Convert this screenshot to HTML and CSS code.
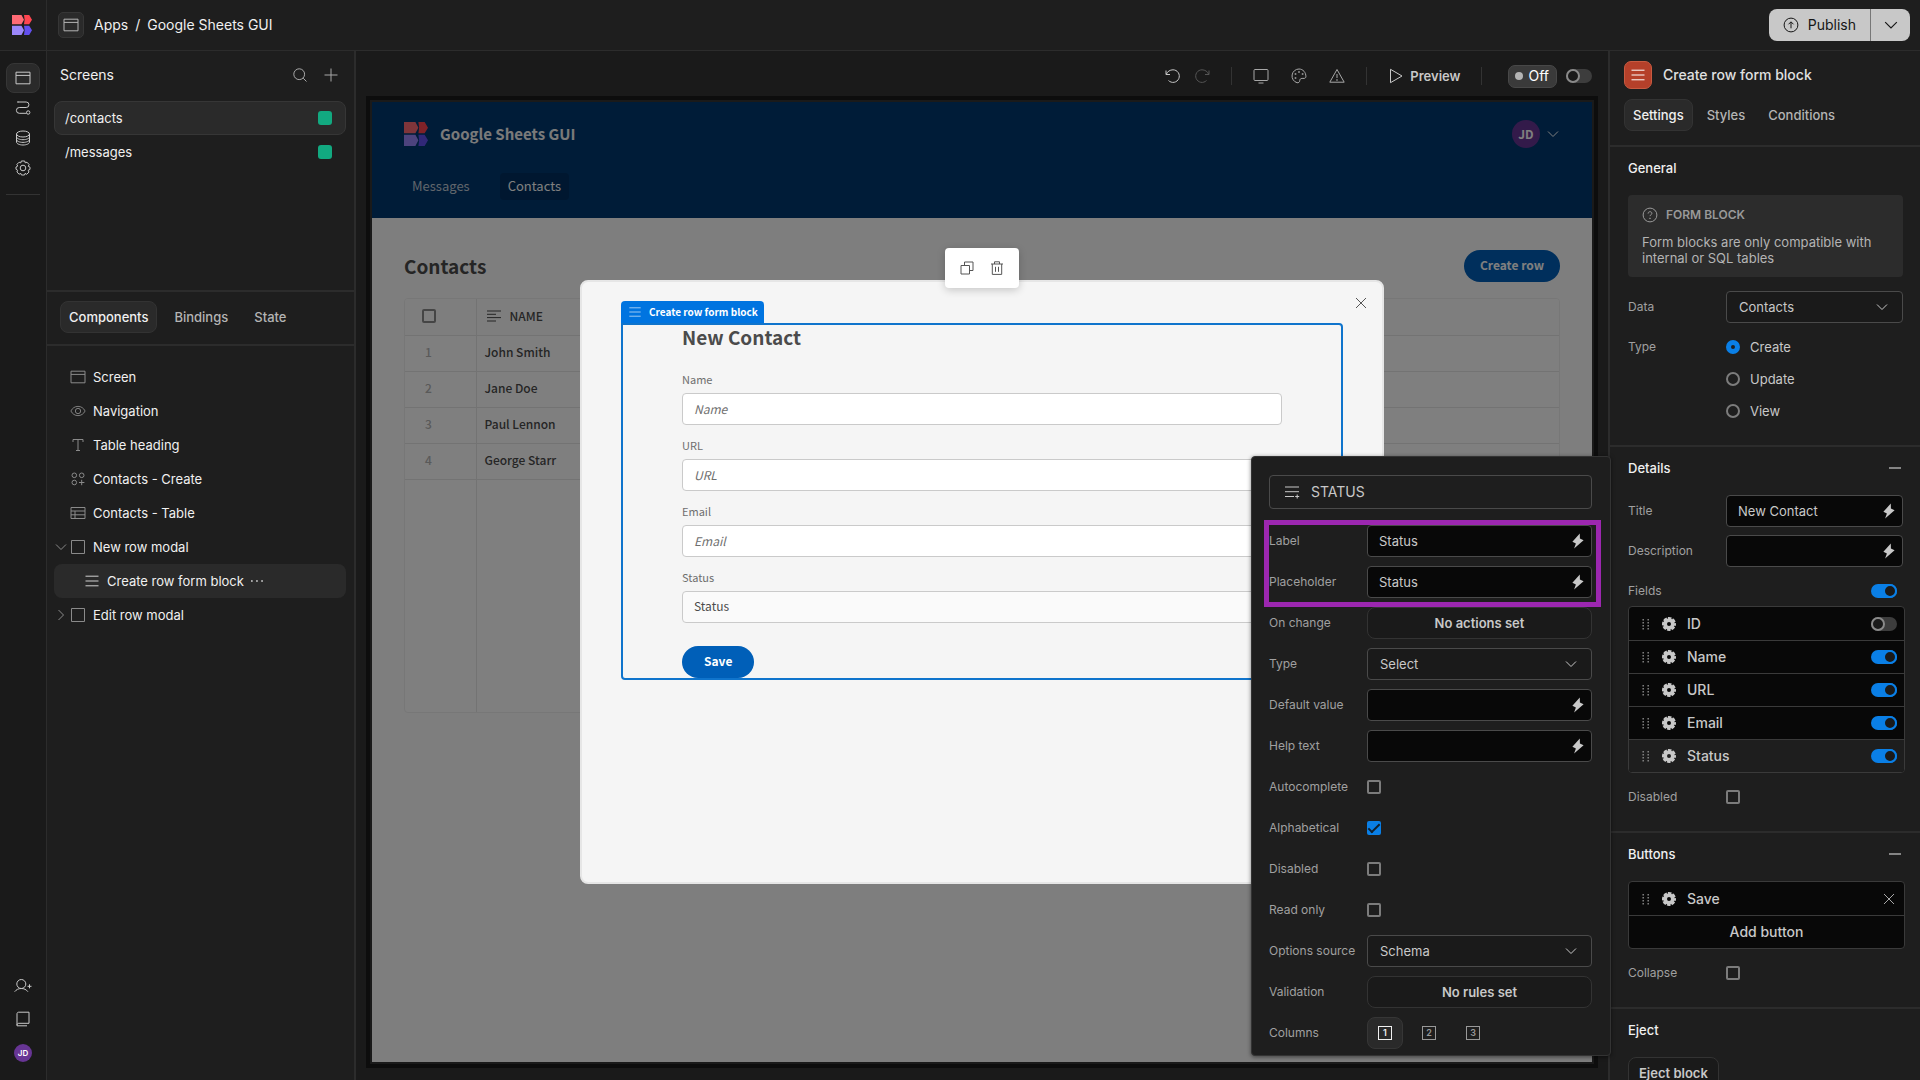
FILE: index.html
```html
<!DOCTYPE html>
<html lang="en">
<head>
    <meta charset="UTF-8">
    <meta name="viewport" content="width=device-width, initial-scale=1.0">
    <title>Google Sheets GUI</title>
    <link rel="stylesheet" href="styles.css">
</head>
<body>
    <svg class="sprite" aria-hidden="true">
        <symbol id="i-window" viewBox="0 0 16 16"><path d="M1 2.2h14v11.6H1zM1 5.4h14"/></symbol>
        <symbol id="i-flow" viewBox="0 0 16 16"><path d="M3.500 2h7.700a2.700 2.700 0 0 1 0 5.500H4.300a2.900 2.900 0 0 0 0 5.800h7.200M2 2h2"/><circle cx="13.200" cy="12.500" r="1.700"/></symbol>
        <symbol id="i-data" viewBox="0 0 16 16"><ellipse cx="8" cy="4" rx="6.500" ry="3"/><path d="M1.500 4v8c0 1.700 2.900 3 6.500 3s6.500-1.300 6.500-3V4M1.500 6.700c0 1.700 2.900 3 6.500 3s6.500-1.300 6.500-3M1.500 9.400c0 1.700 2.900 3 6.500 3s6.500-1.300 6.500-3"/></symbol>
        <symbol id="i-gear" viewBox="0 0 16 16"><circle cx="8" cy="8" r="2.800"/><path d="M6.300 1h3.400l.5 1.800 1.800-.6 2.200 2.500-1 1.500 1.800 1v2.200l-1.800.9.800 1.800-2.300 2.200-1.600-.9-.6 1.600H6.400l-.6-1.600-1.700.8-2.200-2.200.8-1.700L1 9.300V7l1.700-.9-.8-1.700 2.200-2.200 1.700.7z"/></symbol>
        <symbol id="i-gear-fill" viewBox="0 0 16 16"><circle cx="8" cy="8" r="3.900" stroke-width="3.800"/><circle cx="8" cy="8" r="5.900" stroke-width="2.200" stroke-dasharray="3.500 1.134" stroke-dashoffset="1.750"/></symbol>
        <symbol id="i-user-plus" viewBox="0 0 18 16"><circle cx="7.300" cy="6" r="4.500"/><path d="M.7 13.700c1.600-2.200 3.900-3.200 6.600-3.200s5 1 6.600 3.200M13.500 8.300h4M15.500 6.300v4"/></symbol>
        <symbol id="i-book" viewBox="0 0 16 16"><path d="M14 1.200H3.600c-.9 0-1.600.7-1.600 1.600v12h10M2 14.200c0-1.100.6-1.900 1.800-1.900H14V1.200"/></symbol>
        <symbol id="i-search" viewBox="0 0 16 16"><circle cx="7.200" cy="7.200" r="5.400"/><path d="M11.200 11.200l3.300 3.300"/></symbol>
        <symbol id="i-plus" viewBox="0 0 16 16"><path d="M8 1.500v13M1.500 8h13"/></symbol>
        <symbol id="i-eye" viewBox="0 0 18 16"><path d="M1 8c1.700-3.300 4.500-5.200 8-5.200S15.300 4.700 17 8c-1.700 3.300-4.500 5.200-8 5.200S2.700 11.300 1 8z"/><circle cx="9" cy="8" r="3"/></symbol>
        <symbol id="i-text" viewBox="0 0 16 16"><path d="M3 5V2.500h10V5M8 2.500v11M6 13.500h4"/></symbol>
        <symbol id="i-blocks" viewBox="0 0 16 16"><circle cx="4.300" cy="4.300" r="2.300"/><circle cx="11.700" cy="4.300" r="2.300"/><circle cx="4.300" cy="11.500" r="2.300"/><path d="M11.700 8.800v5.400M9 11.500h5.400"/></symbol>
        <symbol id="i-table" viewBox="0 0 16 16"><path d="M1 2.500h14v11H1zM1 6h14M1 9.800h14M5 6v7.500"/></symbol>
        <symbol id="i-square" viewBox="0 0 16 16"><path d="M1.500 1.500h13v13h-13z"/></symbol>
        <symbol id="i-rows" viewBox="0 0 16 16"><path d="M1.500 3.200h13M1.500 8h13M1.500 12.800h13"/></symbol>
        <symbol id="i-down" viewBox="0 0 12 12"><path d="M1 3.500l5 5 5-5"/></symbol>
        <symbol id="i-right" viewBox="0 0 12 12"><path d="M3.500 1l5 5-5 5"/></symbol>
        <symbol id="i-dots" viewBox="0 0 14 14"><path fill="currentColor" stroke="none" d="M1 6.200h1.700v1.600H1zM6.100 6.200h1.700v1.600H6.100zM11.200 6.200h1.700v1.600h-1.700z"/></symbol>
        <symbol id="i-undo" viewBox="0 0 16 16"><path d="M1 2.500v4h4M1.300 6.300C2.400 3.500 5 1.800 8 1.800a6.300 6.300 0 1 1-4.500 10.700"/></symbol>
        <symbol id="i-redo" viewBox="0 0 16 16"><path d="M15 2.500v4h-4M14.700 6.300C13.600 3.500 11 1.800 8 1.800a6.300 6.300 0 1 0 4.500 10.700"/></symbol>
        <symbol id="i-monitor" viewBox="0 0 16 16"><rect x="1" y="1.500" width="14" height="11" rx="1"/><path d="M5.500 15h5"/></symbol>
        <symbol id="i-palette" viewBox="0 0 16 16"><path d="M8 1a7 7 0 0 0-2 13.700c1.400.4 2.700-.6 2.700-2 0-1.500 1-2.300 2.400-2.300h2c1 0 1.700-.7 1.800-1.700C15 4.500 12 1 8 1z"/><path fill="currentColor" stroke="none" d="M7.200 3.200h1.600v1.600H7.200zM3.700 5.200h1.600v1.600H3.700zM10.800 5.200h1.600v1.600h-1.600zM3.700 9.200h1.600v1.600H3.700z"/></symbol>
        <symbol id="i-warning" viewBox="0 0 16 16"><path d="M8 1.500l7.200 12.700H.8zM8 6v4"/><circle cx="8" cy="12" r=".4"/></symbol>
        <symbol id="i-play" viewBox="0 0 16 16"><path d="M2.500 1.300v13.400L14 8z"/></symbol>
        <symbol id="i-publish" viewBox="0 0 16 16"><circle cx="8" cy="8" r="6.900"/><path d="M8 11.300V5M5.500 7.300L8 4.800l2.500 2.500"/></symbol>
        <symbol id="i-question" viewBox="0 0 16 16"><circle cx="8" cy="8" r="6.900"/><path d="M6.100 6.600c0-1.200.8-1.900 1.900-1.900s1.900.7 1.900 1.700c0 1.400-1.900 1.300-1.900 2.700"/><circle cx="8" cy="11.300" r=".4"/></symbol>
        <symbol id="i-bolt" viewBox="0 0 12 16"><path fill="currentColor" stroke="none" d="M7.800.4L.4 8.800l3.500 1.600-1.800 5.200 9.500-8.400-3.700-1.600z"/></symbol>
        <symbol id="i-minus" viewBox="0 0 14 14"><path d="M1 7h12" stroke-width="1.500"/></symbol>
        <symbol id="i-close" viewBox="0 0 12 12"><path d="M1 1l10 10M11 1L1 11"/></symbol>
        <symbol id="i-grip" viewBox="0 0 8 12"><path fill="currentColor" stroke="none" d="M.5 1h1.400v1.400H.5zM5.500 1h1.400v1.400H5.500zM.5 4h1.400v1.400H.5zM5.500 4h1.400v1.400H5.500zM.5 7h1.400v1.400H.5zM5.500 7h1.400v1.400H5.500zM.5 10h1.400v1.400H.5zM5.500 10h1.400v1.400H5.500z"/></symbol>
        <symbol id="i-form" viewBox="0 0 16 16"><path d="M1 3h14M1 7.700h14M1 12.500h9M13.200 10.500v4M11.200 12.500h4"/></symbol>
        <symbol id="i-align" viewBox="0 0 14 12"><path d="M0 1h14M0 4.300h9M0 7.600h14M0 11h9"/></symbol>
        <symbol id="i-copy" viewBox="0 0 14 14"><path d="M1 4.500h8.500V13H1zM4.500 4.500V1H13v8.500H9.500"/></symbol>
        <symbol id="i-trash" viewBox="0 0 14 14"><path d="M1 3h12M2.300 3v10.400h9.400V3M4.500 3V.8h5V3M5.500 5.800v5M8.500 5.800v5"/></symbol>
        <symbol id="i-logo" viewBox="0 0 20 20"><g stroke="none"><path fill="#ff6b75" d="M0 0h9.500L12 4.700 9.500 9.300H0z"/><path fill="#ff4550" d="M12 0h5.200L20 4.700l-2.800 4.600H12l.6-4.600z"/><path fill="#9b87fa" d="M0 10.700h9.500L12 15.300 9.500 20H0z"/><path fill="#6350f0" d="M12 10.700h5.200l2.800 4.600-2.800 4.700H12l.6-4.700z"/></g></symbol>
    </svg>

    <header class="topbar">
        <a class="brand" href="#" aria-label="Home"><svg class="icon icon-20"><use href="#i-logo"/></svg></a>
        <nav class="crumbs">
            <span class="crumb-icon"><svg class="icon"><use href="#i-window"/></svg></span>
            <a href="#">Apps</a>
            <span class="slash">/</span>
            <a href="#">Google Sheets GUI</a>
        </nav>
        <div class="publish">
            <button class="publish-main"><svg class="icon"><use href="#i-publish"/></svg>Publish</button>
            <button class="publish-more" aria-label="Publish options"><svg class="icon icon-14"><use href="#i-down"/></svg></button>
        </div>
    </header>

    <div class="workspace">
        <nav class="rail">
            <a class="rail-link active" href="#" aria-label="Design"><svg class="icon"><use href="#i-window"/></svg></a>
            <a class="rail-link" href="#" aria-label="Automations"><svg class="icon"><use href="#i-flow"/></svg></a>
            <a class="rail-link" href="#" aria-label="Data"><svg class="icon"><use href="#i-data"/></svg></a>
            <a class="rail-link" href="#" aria-label="Settings"><svg class="icon"><use href="#i-gear"/></svg></a>
            <hr>
            <div class="rail-bottom">
                <a href="#" aria-label="Invite user"><svg class="icon icon-18"><use href="#i-user-plus"/></svg></a>
                <a href="#" aria-label="Docs"><svg class="icon"><use href="#i-book"/></svg></a>
                <a class="rail-avatar" href="#">JD</a>
            </div>
        </nav>

        <aside class="left">
            <section class="screens">
                <header class="screens-head">
                    <h2>Screens</h2>
                    <button class="plain" aria-label="Search"><svg class="icon"><use href="#i-search"/></svg></button>
                    <button class="plain" aria-label="Add screen"><svg class="icon"><use href="#i-plus"/></svg></button>
                </header>
                <a class="row selected" href="#">/contacts<span class="role"></span></a>
                <a class="row" href="#">/messages<span class="role"></span></a>
            </section>
            <div class="tabs tree-tabs">
                <button class="tab active">Components</button>
                <button class="tab">Bindings</button>
                <button class="tab">State</button>
            </div>
            <div class="tree">
                <a class="node" href="#"><span class="caret"></span><svg class="icon"><use href="#i-window"/></svg>Screen</a>
                <a class="node" href="#"><span class="caret"></span><svg class="icon"><use href="#i-eye"/></svg>Navigation</a>
                <a class="node" href="#"><span class="caret"></span><svg class="icon"><use href="#i-text"/></svg>Table heading</a>
                <a class="node" href="#"><span class="caret"></span><svg class="icon"><use href="#i-blocks"/></svg>Contacts - Create</a>
                <a class="node" href="#"><span class="caret"></span><svg class="icon"><use href="#i-table"/></svg>Contacts - Table</a>
                <a class="node" href="#"><span class="caret"><svg class="icon icon-12"><use href="#i-down"/></svg></span><svg class="icon"><use href="#i-square"/></svg>New row modal</a>
                <a class="node child selected" href="#"><span class="caret"></span><svg class="icon"><use href="#i-rows"/></svg>Create row form block<svg class="icon icon-14 more"><use href="#i-dots"/></svg></a>
                <a class="node" href="#"><span class="caret"><svg class="icon icon-12"><use href="#i-right"/></svg></span><svg class="icon"><use href="#i-square"/></svg>Edit row modal</a>
            </div>
        </aside>

        <main class="center">
            <div class="toolbar">
                <button class="plain bright" aria-label="Undo"><svg class="icon"><use href="#i-undo"/></svg></button>
                <button class="plain dim" aria-label="Redo"><svg class="icon"><use href="#i-redo"/></svg></button>
                <span class="divider"></span>
                <div class="toolbar-group">
                    <button class="plain" aria-label="Device"><svg class="icon"><use href="#i-monitor"/></svg></button>
                    <button class="plain" aria-label="Theme"><svg class="icon"><use href="#i-palette"/></svg></button>
                    <button class="plain" aria-label="Errors"><svg class="icon"><use href="#i-warning"/></svg></button>
                </div>
                <span class="divider"></span>
                <button class="plain preview-button"><svg class="icon"><use href="#i-play"/></svg>Preview</button>
                <span class="divider"></span>
                <label class="off-pill" for="live"><span class="dot"></span>Off</label>
                <input class="switch" type="checkbox" id="live">
            </div>

            <div class="frame">
                <div class="app">
                    <header class="app-nav">
                        <div class="app-brand">
                            <svg class="icon icon-24"><use href="#i-logo"/></svg>
                            <strong>Google Sheets GUI</strong>
                            <button class="app-user"><span class="app-avatar">JD</span><svg class="icon icon-12"><use href="#i-down"/></svg></button>
                        </div>
                        <nav class="app-links">
                            <a href="#">Messages</a>
                            <a class="active" href="#">Contacts</a>
                        </nav>
                    </header>
                    <div class="app-body">
                        <div class="app-heading">
                            <h1>Contacts</h1>
                            <button class="cta">Create row</button>
                        </div>
                        <div class="grid">
                            <table>
                                <thead>
                                    <tr><th class="num"><input class="check" type="checkbox" aria-label="Select all"></th><th><span class="th-label"><svg class="icon icon-14"><use href="#i-align"/></svg>NAME</span></th></tr>
                                </thead>
                                <tbody>
                                    <tr><td class="num">1</td><td>John Smith</td></tr>
                                    <tr><td class="num">2</td><td>Jane Doe</td></tr>
                                    <tr><td class="num">3</td><td>Paul Lennon</td></tr>
                                    <tr><td class="num">4</td><td>George Starr</td></tr>
                                    <tr class="filler"><td class="num"></td><td></td></tr>
                                </tbody>
                            </table>
                        </div>
                    </div>
                </div>

                <div class="overlay">
                    <div class="modal">
                        <div class="float-tools">
                            <button class="plain" aria-label="Duplicate"><svg class="icon icon-14"><use href="#i-copy"/></svg></button>
                            <button class="plain" aria-label="Delete"><svg class="icon icon-14"><use href="#i-trash"/></svg></button>
                        </div>
                        <button class="plain modal-close" aria-label="Close"><svg class="icon icon-12"><use href="#i-close"/></svg></button>
                        <span class="block-tag"><svg class="icon icon-14"><use href="#i-rows"/></svg>Create row form block</span>
                        <div class="block">
                            <form class="form">
                                <h2>New Contact</h2>
                                <div class="field"><label for="f-name">Name</label><input id="f-name" type="text" placeholder="Name"></div>
                                <div class="field"><label for="f-url">URL</label><input id="f-url" type="text" placeholder="URL"></div>
                                <div class="field"><label for="f-email">Email</label><input id="f-email" type="text" placeholder="Email"></div>
                                <div class="field"><label for="f-status">Status</label><select id="f-status"><option>Status</option></select></div>
                                <button class="cta" type="button">Save</button>
                            </form>
                        </div>
                    </div>
                </div>
            </div>
        </main>

        <aside class="right">
            <header class="right-head">
                <div class="right-title">
                    <span class="block-icon"><svg class="icon"><use href="#i-rows"/></svg></span>
                    <h2>Create row form block</h2>
                </div>
                <div class="tabs">
                    <button class="tab active">Settings</button>
                    <button class="tab">Styles</button>
                    <button class="tab">Conditions</button>
                </div>
            </header>

            <section class="group">
                <h3>General</h3>
                <div class="info">
                    <h4><svg class="icon"><use href="#i-question"/></svg>FORM BLOCK</h4>
                    <p>Form blocks are only compatible with internal or SQL tables</p>
                </div>
                <div class="setting">
                    <label for="s-data">Data</label>
                    <span class="picker"><select id="s-data"><option>Contacts</option></select><svg class="icon icon-12"><use href="#i-down"/></svg></span>
                </div>
                <div class="setting setting-radios">
                    <span>Type</span>
                    <div class="radios">
                        <label><input type="radio" name="type" checked>Create</label>
                        <label><input type="radio" name="type">Update</label>
                        <label><input type="radio" name="type">View</label>
                    </div>
                </div>
            </section>

            <section class="group">
                <h3>Details<button class="plain" aria-label="Collapse details"><svg class="icon icon-14"><use href="#i-minus"/></svg></button></h3>
                <div class="setting">
                    <label for="s-title">Title</label>
                    <span class="bindable"><input type="text" id="s-title" value="New Contact"><svg class="icon bolt"><use href="#i-bolt"/></svg></span>
                </div>
                <div class="setting">
                    <label for="s-desc">Description</label>
                    <span class="bindable"><input type="text" id="s-desc"><svg class="icon bolt"><use href="#i-bolt"/></svg></span>
                </div>
                <div class="fields-head"><label for="t-all">Fields</label><input class="switch" type="checkbox" id="t-all" checked></div>
                <ul class="list">
                    <li><svg class="icon grip"><use href="#i-grip"/></svg><svg class="icon"><use href="#i-gear-fill"/></svg><label for="t-id">ID</label><input class="switch" type="checkbox" id="t-id"></li>
                    <li><svg class="icon grip"><use href="#i-grip"/></svg><svg class="icon"><use href="#i-gear-fill"/></svg><label for="t-name">Name</label><input class="switch" type="checkbox" id="t-name" checked></li>
                    <li><svg class="icon grip"><use href="#i-grip"/></svg><svg class="icon"><use href="#i-gear-fill"/></svg><label for="t-url">URL</label><input class="switch" type="checkbox" id="t-url" checked></li>
                    <li><svg class="icon grip"><use href="#i-grip"/></svg><svg class="icon"><use href="#i-gear-fill"/></svg><label for="t-email">Email</label><input class="switch" type="checkbox" id="t-email" checked></li>
                    <li class="current"><svg class="icon grip"><use href="#i-grip"/></svg><svg class="icon"><use href="#i-gear-fill"/></svg><label for="t-status">Status</label><input class="switch" type="checkbox" id="t-status" checked></li>
                </ul>
                <div class="setting">
                    <label for="s-disabled">Disabled</label>
                    <input class="check" type="checkbox" id="s-disabled">
                </div>
            </section>

            <section class="group">
                <h3>Buttons<button class="plain" aria-label="Collapse buttons"><svg class="icon icon-14"><use href="#i-minus"/></svg></button></h3>
                <ul class="list">
                    <li><svg class="icon grip"><use href="#i-grip"/></svg><svg class="icon"><use href="#i-gear-fill"/></svg><span class="item-name">Save</span><button class="plain" aria-label="Remove"><svg class="icon icon-12"><use href="#i-close"/></svg></button></li>
                    <li class="add-row"><button class="add">Add button</button></li>
                </ul>
                <div class="setting">
                    <label for="s-collapse">Collapse</label>
                    <input class="check" type="checkbox" id="s-collapse">
                </div>
            </section>

            <section class="group">
                <h3>Eject</h3>
                <button class="action eject">Eject block</button>
            </section>
        </aside>

        <div class="popover">
            <div class="popover-title"><svg class="icon"><use href="#i-form"/></svg>STATUS</div>
            <div class="highlight"></div>
            <div class="setting"><label for="p-label">Label</label><span class="bindable"><input type="text" id="p-label" value="Status"><svg class="icon bolt"><use href="#i-bolt"/></svg></span></div>
            <div class="setting"><label for="p-ph">Placeholder</label><span class="bindable"><input type="text" id="p-ph" value="Status"><svg class="icon bolt"><use href="#i-bolt"/></svg></span></div>
            <div class="setting"><span>On change</span><button class="action">No actions set</button></div>
            <div class="setting"><label for="p-type">Type</label><span class="picker"><select id="p-type"><option>Select</option></select><svg class="icon icon-12"><use href="#i-down"/></svg></span></div>
            <div class="setting"><label for="p-default">Default value</label><span class="bindable"><input type="text" id="p-default"><svg class="icon bolt"><use href="#i-bolt"/></svg></span></div>
            <div class="setting"><label for="p-help">Help text</label><span class="bindable"><input type="text" id="p-help"><svg class="icon bolt"><use href="#i-bolt"/></svg></span></div>
            <div class="setting"><label for="p-auto">Autocomplete</label><input class="check" type="checkbox" id="p-auto"></div>
            <div class="setting"><label for="p-alpha">Alphabetical</label><input class="check" type="checkbox" id="p-alpha" checked></div>
            <div class="setting"><label for="p-disabled">Disabled</label><input class="check" type="checkbox" id="p-disabled"></div>
            <div class="setting"><label for="p-read">Read only</label><input class="check" type="checkbox" id="p-read"></div>
            <div class="setting"><label for="p-source">Options source</label><span class="picker"><select id="p-source"><option>Schema</option></select><svg class="icon icon-12"><use href="#i-down"/></svg></span></div>
            <div class="setting"><span>Validation</span><button class="action">No rules set</button></div>
            <div class="setting"><span>Columns</span>
                <div class="columns">
                    <button class="active"><span>1</span></button>
                    <button><span>2</span></button>
                    <button><span>3</span></button>
                </div>
            </div>
        </div>
    </div>
</body>
</html>
```

FILE: styles.css
```css
*, *::before {
    box-sizing: border-box;
}
body {
    margin: 0;
    height: 100vh;
    overflow: hidden;
    display: flex;
    flex-direction: column;
    background: #1e1e1e;
    color: #c8c8c8;
    font: 13px/16px Inter, sans-serif;
}
h1, h2, h3, h4, p, ul {
    margin: 0;
    padding: 0;
    font-weight: 500;
}
a {
    color: inherit;
    text-decoration: none;
}
button, input, select {
    font: inherit;
    color: inherit;
    margin: 0;
}
.sprite {
    position: absolute;
    width: 0;
    height: 0;
}

/* icons */
.icon {
    width: 16px;
    height: 16px;
    flex: none;
    fill: none;
    stroke: currentColor;
}
.icon-12 { width: 12px; height: 12px; }
.icon-14 { width: 14px; height: 14px; }
.icon-18 { width: 18px; }
.icon-20 { width: 20px; height: 20px; }
.icon-24 { width: 24px; height: 24px; }

/* shared controls */
.plain {
    background: none;
    border: 0;
    padding: 0;
    display: flex;
    align-items: center;
    color: #a8a8a8;
}
.tabs {
    display: flex;
    gap: 8px;
}
.tab {
    height: 32px;
    padding: 0 8px;
    background: none;
    border: 1px solid transparent;
    border-radius: 8px;
    font-weight: 500;
    color: #b4b4b4;
}
.tab.active {
    background: #2a2a2a;
    border-color: #333;
    color: #f0f0f0;
}
.switch {
    appearance: none;
    width: 26px;
    height: 14px;
    border-radius: 7px;
    background: #3d3d3d;
    display: flex;
}
.switch::before {
    content: "";
    width: 14px;
    height: 14px;
    border: 2px solid #8a8a8a;
    border-radius: 50%;
    background: #1a1a1a;
}
.switch:checked {
    background: #0a7fe6;
    justify-content: flex-end;
}
.switch:checked::before {
    border-color: #0a7fe6;
}
.check {
    appearance: none;
    width: 14px;
    height: 14px;
    border: 2px solid #7c7c7c;
    border-radius: 2px;
    display: grid;
    place-items: center;
}
.check:checked {
    border: 0;
    background: #0a7fe6;
}
.check:checked::before {
    content: "";
    width: 12px;
    height: 6px;
    margin-bottom: 3px;
    border: solid #10202e;
    border-width: 0 0 2px 2px;
    transform: rotate(-45deg);
}
.cta {
    align-self: flex-start;
    height: 32px;
    padding: 0 16px 3px;
    border: 0;
    border-radius: 16px;
    background: #005fb8;
    color: #fff;
    font-weight: 700;
}

/* top bar */
.topbar {
    flex: none;
    height: 51px;
    display: flex;
    align-items: center;
    border-bottom: 1px solid #2c2c2c;
    font-size: 14px;
    color: #f0f0f0;
}
.brand {
    width: 47px;
    height: 50px;
    padding-left: 12px;
    display: flex;
    align-items: center;
    border-right: 1px solid #2c2c2c;
}
.crumbs {
    flex: 1;
    display: flex;
    align-items: center;
    gap: 7px;
    padding-left: 11px;
}
.crumb-icon {
    width: 26px;
    height: 26px;
    margin-right: 3px;
    display: grid;
    place-items: center;
    background: #2a2a2a;
    border: 1px solid #363636;
    border-radius: 5px;
    color: #b4b4b4;
}
.publish {
    display: flex;
    margin-right: 10px;
}
.publish button {
    height: 32px;
    border: 0;
    background: #c8c8c8;
    color: #161616;
    display: flex;
    align-items: center;
}
.publish-main {
    padding: 0 14px;
    gap: 9px;
    border-radius: 8px 0 0 8px;
}
.publish .publish-more {
    width: 40px;
    justify-content: center;
    border-left: 1px solid #777;
    border-radius: 0 8px 8px 0;
}

.workspace {
    flex: 1;
    min-height: 0;
    display: flex;
    position: relative;
}

/* icon rail */
.rail {
    width: 47px;
    flex: none;
    background: #1a1a1a;
    border-right: 1px solid #2c2c2c;
    padding: 12px 6px 18px;
    display: flex;
    flex-direction: column;
    align-items: center;
    color: #c8c8c8;
}
.rail-link {
    width: 34px;
    height: 30px;
    display: grid;
    place-items: center;
    border: 1px solid transparent;
    border-radius: 8px;
}
.rail-link.active {
    background: #2a2a2a;
    border-color: #363636;
}
.rail hr {
    width: 100%;
    margin: 11px 0 0;
    border: 0;
    border-top: 1px solid #333;
}
.rail-bottom {
    margin-top: auto;
    display: flex;
    flex-direction: column;
    align-items: center;
    gap: 17px;
}
.rail-bottom a {
    display: flex;
}
.rail-bottom .rail-avatar {
    width: 18px;
    height: 18px;
    align-items: center;
    justify-content: center;
    border-radius: 50%;
    background: #673594;
    color: #fff;
    font-size: 8px;
    font-weight: 600;
}

/* screens and component tree */
.left {
    width: 309px;
    flex: none;
    border-right: 2px solid #2c2c2c;
    color: #f0f0f0;
}
.screens {
    height: 241px;
    padding: 0 8px 0 7px;
    border-bottom: 2px solid #2c2c2c;
}
.screens-head {
    display: flex;
    align-items: center;
    gap: 15px;
    padding: 16px 7px 18px 6px;
}
.screens-head h2 {
    flex: 1;
    font-size: 14px;
    font-weight: 400;
}
.row {
    height: 34px;
    padding: 0 13px 0 10px;
    display: flex;
    align-items: center;
    justify-content: space-between;
    border: 1px solid transparent;
    border-radius: 8px;
}
.selected {
    background: #2a2a2a;
    border-color: #363636;
}
.role {
    width: 14px;
    height: 14px;
    border-radius: 3px;
    background: #12a980;
}
.tree-tabs {
    padding: 9px 13px 11px;
    border-bottom: 2px solid #2c2c2c;
}
.tree {
    padding: 14px 8px 0 7px;
}
.node {
    height: 34px;
    display: flex;
    align-items: center;
    border: 1px solid transparent;
    border-radius: 8px;
}
.node > .icon {
    margin-right: 7px;
    color: #8a8a8a;
}
.caret {
    width: 15px;
    display: flex;
    color: #8a8a8a;
}
.child .caret {
    width: 29px;
}
.child > .icon {
    color: #d0d0d0;
}
.child > .more {
    margin-left: 6px;
}

/* preview area */
.center {
    flex: 1;
    min-width: 0;
    background: #1a1a1a;
    display: flex;
    flex-direction: column;
    padding: 0 10px 12px;
}
.toolbar {
    height: 45px;
    padding: 5px 6px 0 0;
    display: flex;
    align-items: center;
    justify-content: flex-end;
}
.toolbar .bright { color: #c8c8c8; margin-right: 13px; }
.toolbar .dim { color: #555; }
.divider {
    width: 1px;
    height: 18px;
    margin: 0 21px;
    background: #333;
}
.toolbar-group {
    display: flex;
    gap: 22px;
}
.preview-button {
    gap: 6px;
    font-weight: 600;
    color: #c8c8c8;
}
.off-pill {
    height: 23px;
    margin-left: 5px;
    margin-right: 9px;
    padding: 0 7px 0 6px;
    display: flex;
    align-items: center;
    gap: 5px;
    border: 1px solid #484848;
    border-radius: 7px;
    background: #3a3a3a;
    color: #fff;
    font-size: 14px;
}
.dot {
    width: 8px;
    height: 8px;
    border-radius: 50%;
    background: #b4b4b4;
}
.frame {
    flex: 1;
    min-height: 0;
    position: relative;
    padding: 2px;
    border: 4px solid #0d0d0d;
    font-family: "Noto Sans CJK SC", sans-serif;
    font-size: 12px;
}
.app {
    height: 100%;
    background: #fcfcfc;
    color: #4b4b4b;
}
.app-nav {
    height: 116px;
    padding: 18px 32px 0;
    background: #003870;
    color: #fff;
}
.app-brand {
    display: flex;
    align-items: center;
    gap: 12px;
}
.app-brand strong {
    flex: 1;
    font-size: 15px;
    color: #f4f4f4;
}
.app-user {
    display: flex;
    align-items: center;
    gap: 7px;
    padding: 0 1px 0 0;
    border: 0;
    background: none;
}
.app-avatar {
    width: 28px;
    height: 28px;
    display: grid;
    place-items: center;
    border-radius: 50%;
    background: #673594;
    font-weight: 700;
}
.app-links {
    display: flex;
    gap: 22px;
    margin-top: 25px;
    font-size: 13px;
}
.app-links a {
    padding: 5px 8px 6px;
    border-radius: 4px;
    color: #c0ccd8;
}
.app-links .active {
    background: #002f60;
    color: #fff;
}
.app-body {
    padding: 32px;
}
.app-heading {
    display: flex;
    align-items: center;
    justify-content: space-between;
    margin-bottom: 16px;
}
.app-heading h1 {
    font-size: 19px;
    line-height: 24px;
    font-weight: 700;
}
.grid {
    height: 415px;
    border: 1px solid #eee;
    border-radius: 4px;
    background: #fff;
    overflow: hidden;
}
.grid table {
    width: 100%;
    height: 100%;
    border-collapse: collapse;
}
.grid tr {
    height: 36px;
}
.grid th, .grid td {
    padding: 0 0 2px 8px;
    border-bottom: 1px solid #e6e6e6;
    text-align: left;
    font-weight: 500;
}
.grid th {
    background: #fcfcfc;
}
.grid .num {
    width: 71px;
    padding-left: 20px;
    border-right: 1px solid #e6e6e6;
    color: #b4b4b4;
}
.grid .check {
    margin-left: -3px;
    border-color: #8a8a8a;
}
.grid .filler {
    height: auto;
}
.grid .filler td {
    border-bottom: 0;
}
.th-label {
    display: flex;
    align-items: center;
    gap: 9px;
    padding-left: 2px;
}
.overlay {
    position: absolute;
    inset: 2px;
    background: rgba(0, 0, 0, 0.5);
    display: flex;
    align-items: center;
    justify-content: center;
}
.modal {
    position: relative;
    width: 804px;
    height: 604px;
    padding: 19px 39px;
    background: #f5f5f5;
    border: 2px solid #e6e6e6;
    border-radius: 8px;
    color: #4b4b4b;
}
.float-tools {
    position: absolute;
    top: -34px;
    left: 50%;
    transform: translateX(-50%);
    display: flex;
    gap: 16px;
    padding: 13px 15px;
    border-radius: 4px;
    background: #fff;
    box-shadow: 0 2px 8px rgba(0, 0, 0, 0.2);
}
.float-tools .plain {
    color: #555;
}
.modal-close {
    position: absolute;
    top: 15px;
    right: 15px;
    color: #555;
}
.block-tag {
    display: inline-flex;
    align-items: center;
    gap: 7px;
    height: 22px;
    padding: 0 6px 0 7px;
    vertical-align: top;
    border-radius: 4px 4px 0 0;
    background: #0074e0;
    color: #fff;
    font-size: 10px;
    font-weight: 700;
}
.block-tag .icon {
    opacity: .7;
}
.block {
    border: 2px solid #0f74cc;
    border-radius: 0 4px 4px 4px;
}
.form {
    max-width: 600px;
    margin: 0 auto;
    display: flex;
    flex-direction: column;
}
.form h2 {
    font-size: 19px;
    line-height: 24px;
    font-weight: 700;
    margin-bottom: 22px;
}
.field {
    display: flex;
    flex-direction: column;
    gap: 6px;
    margin-bottom: 12px;
}
.field label {
    font-size: 11px;
    color: #6e6e6e;
}
.field input, .field select {
    appearance: none;
    height: 32px;
    padding: 0 11px 2px;
    border: 1px solid #cacaca;
    border-radius: 4px;
    background: #fff;
    color: #4b4b4b;
}
.field select {
    background: #fafafa;
}
.field input::placeholder {
    font-style: italic;
    color: #6e6e6e;
}
.form .cta {
    margin-top: 11px;
    padding: 0 22px 3px;
}

/* settings panel */
.right {
    width: 312px;
    flex: none;
    overflow: hidden;
    border-left: 2px solid #2c2c2c;
}
.right-head {
    padding: 10px 14px 14px;
    border-bottom: 2px solid #2c2c2c;
}
.right-title {
    display: flex;
    align-items: center;
    gap: 11px;
    margin-bottom: 10px;
}
.right-title h2 {
    font-size: 14px;
    color: #e0e0e0;
}
.right-head .tabs {
    gap: 5px;
}
.block-icon {
    width: 28px;
    height: 28px;
    display: grid;
    place-items: center;
    border: 1px solid #c85a40;
    border-radius: 7px;
    background: #b5402a;
    color: #fff;
}
.group {
    padding: 12px 15px 18px 18px;
    border-bottom: 2px solid #2c2c2c;
    display: flex;
    flex-direction: column;
    gap: 8px;
}
.group h3 {
    display: flex;
    align-items: center;
    justify-content: space-between;
    height: 18px;
    padding-right: 3px;
    margin-bottom: 10px;
    font-size: 13px;
    color: #f0f0f0;
}
.info {
    margin-right: 2px;
    margin-bottom: 6px;
    padding: 12px 14px 11px;
    border-radius: 4px;
    background: #2c2c2c;
}
.info h4 {
    display: flex;
    align-items: center;
    gap: 8px;
    margin-bottom: 11px;
    font-size: 12px;
    font-weight: 600;
    color: #999;
}
.info p {
    font-weight: 400;
    color: #b4b4b4;
}
.setting {
    display: grid;
    grid-template-columns: 98px 1fr;
    align-items: center;
    min-height: 32px;
}
.group .setting {
    margin-right: 2px;
}
.setting > label, .setting > span:first-child, .fields-head label {
    font-size: 12px;
    color: #a0a0a0;
}
.picker, .bindable {
    display: grid;
    align-items: center;
}
.picker > *, .bindable > * {
    grid-area: 1 / 1;
}
.picker select, .bindable input {
    appearance: none;
    width: 100%;
    height: 32px;
    padding: 0 32px 0 12px;
    border: 1px solid #4a4a4a;
    border-radius: 4px;
    background: #1a1a1a;
    color: #c8c8c8;
}
.bindable input {
    padding-left: 11px;
    background: #080808;
}
.picker .icon, .bindable .icon {
    justify-self: end;
    margin-right: 15px;
    pointer-events: none;
}
.bindable .bolt {
    width: 12px;
    margin-right: 8px;
}
.setting-radios {
    align-items: start;
}
.setting-radios > span:first-child {
    padding-top: 8px;
}
.radios label {
    display: flex;
    align-items: center;
    gap: 10px;
    height: 32px;
}
.radios input {
    appearance: none;
    width: 14px;
    height: 14px;
    border: 2px solid #7c7c7c;
    border-radius: 50%;
}
.radios input:checked {
    border: 5px solid #0a7fe6;
}
.fields-head {
    display: flex;
    align-items: center;
    justify-content: space-between;
    height: 31px;
    padding-right: 8px;
}
.fields-head + .list {
    margin-top: -8px;
}
.list {
    list-style: none;
    border: 1px solid #3a3a3a;
    border-radius: 4px;
    background: #080808;
    overflow: hidden;
}
.list li {
    height: 33px;
    padding: 0 7px 0 13px;
    display: flex;
    align-items: center;
    font-size: 14px;
}
.list li + li {
    border-top: 1px solid #3a3a3a;
}
.list li.current {
    background: #1e1e1e;
}
.list .grip {
    width: 8px;
    height: 12px;
    margin-right: 11px;
    color: #8a8a8a;
}
.list label, .item-name {
    flex: 1;
    padding-left: 10px;
}
.list li .plain {
    padding-right: 2px;
}
.list .add-row {
    padding: 0;
}
.add {
    flex: 1;
    border: 0;
    background: none;
}
.action {
    height: 32px;
    border: 1px solid #333;
    border-radius: 8px;
    background: #1a1a1a;
    font-weight: 600;
}
.eject {
    align-self: flex-start;
    padding: 0 10px;
}

/* field settings popover */
.popover {
    position: absolute;
    top: 405px;
    right: 309px;
    width: 360px;
    padding: 18px 18px 6px 17px;
    display: flex;
    flex-direction: column;
    gap: 9px;
    border: 1px solid #333;
    border-radius: 4px;
    background: #1e1e1e;
    box-shadow: 0 1px 4px rgba(0, 0, 0, 0.5);
}
.popover-title {
    height: 34px;
    margin-bottom: 7px;
    padding: 0 14px;
    display: flex;
    align-items: center;
    gap: 11px;
    border: 1px solid #4a4a4a;
    border-radius: 4px;
    font-size: 14px;
}
.highlight {
    position: absolute;
    top: 63px;
    left: 12px;
    right: 9px;
    height: 87px;
    border: 5px solid #9c27b0;
    pointer-events: none;
}
.columns {
    display: flex;
    gap: 8px;
}
.columns button {
    width: 36px;
    height: 32px;
    padding: 0;
    display: grid;
    place-items: center;
    border: 1px solid transparent;
    border-radius: 8px;
    background: none;
    color: #999;
}
.columns button.active {
    background: #2a2a2a;
    border-color: #363636;
    color: #f0f0f0;
}
.columns span {
    width: 14px;
    height: 14px;
    border: 1px solid currentColor;
    font-size: 9px;
    font-weight: 600;
    line-height: 12px;
}
```
